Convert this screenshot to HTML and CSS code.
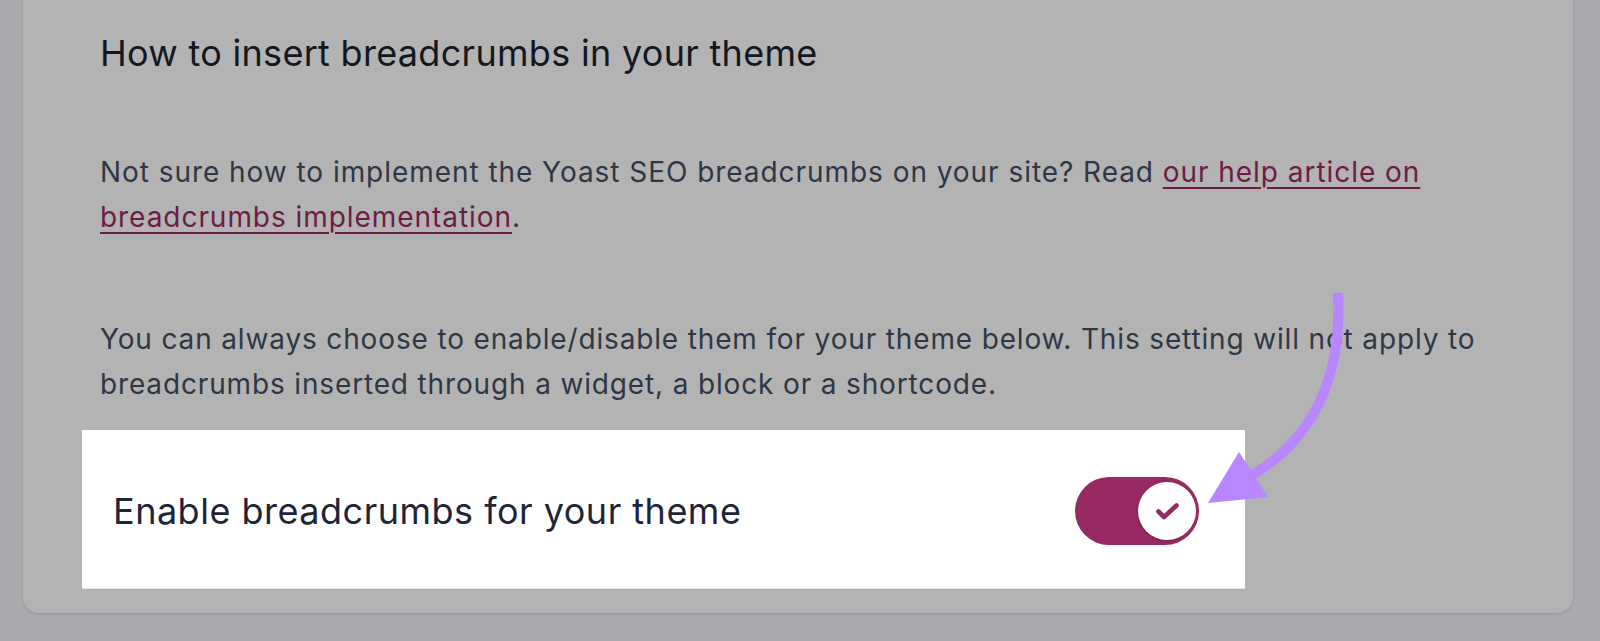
FILE: index.html
```html
<!DOCTYPE html>
<html lang="en">
<head>
<meta charset="utf-8">
<title>Breadcrumbs settings</title>
<link rel="stylesheet" href="styles.css">
</head>
<body>
<div class="page">
  <section class="card">
    <h2 class="title">How to insert breadcrumbs in your theme</h2>
    <p class="text first">Not sure how to implement the Yoast SEO breadcrumbs on your site? Read <a href="#" class="link">our help article on<br>breadcrumbs implementation</a>.</p>
    <p class="text second">You can always choose to enable/disable them for your theme below. This setting will not apply to<br>breadcrumbs inserted through a widget, a block or a shortcode.</p>
    <div class="setting">
      <span class="setting-label">Enable breadcrumbs for your theme</span>
      <span class="toggle">
        <span class="knob">
          <svg class="check" viewBox="0 0 58 58" width="58" height="58" aria-hidden="true"><path d="M20.5 29.5 L26 35 L38.5 23.5" fill="none" stroke="#962961" stroke-width="4.6" stroke-linecap="round" stroke-linejoin="round"/></svg>
        </span>
      </span>
    </div>
  </section>
  <svg class="arrow" viewBox="0 0 1600 641" width="1600" height="641" aria-hidden="true">
    <path d="M1338 293 Q1345 430 1236 484" fill="none" stroke="#b886fe" stroke-width="10"/>
    <polygon points="1208,503 1239,452 1268,497" fill="#b886fe"/>
  </svg>
</div>
</body>
</html>
```

FILE: styles.css
```css
html, body {
  margin: 0;
  padding: 0;
}
body {
  background: #a9aaae;
  font-family: Inter, "Noto Sans", "Liberation Sans", sans-serif;
  width: 1600px;
  height: 641px;
  overflow: hidden;
}
.page {
  position: relative;
  width: 1600px;
  height: 641px;
  padding: 0 27px 0 23px;
  box-sizing: border-box;
}
.card {
  background: #b3b3b3;
  height: 613px;
  box-sizing: border-box;
  border-radius: 0 0 16px 16px;
  box-shadow: 0 1px 3px rgba(0, 0, 0, 0.12);
  padding: 31px 0 0 77px;
}
.title {
  margin: 0;
  font-size: 36px;
  line-height: 44px;
  font-weight: 400;
  color: #121722;
  letter-spacing: 0.3px;
}
.text {
  margin: 0;
  font-size: 28px;
  line-height: 45px;
  color: #2f3746;
  white-space: nowrap;
  letter-spacing: 0.85px;
}
.text.first {
  letter-spacing: 0.95px;
  margin-top: 75px;
}
.text.second {
  margin-top: 77px;
}
.link {
  color: #6d1b47;
  text-decoration: underline;
  text-decoration-thickness: 2px;
  text-underline-offset: 5px;
}
.setting {
  margin: 23px 0 0 -18px;
  width: 1163px;
  height: 159px;
  box-sizing: border-box;
  background: #ffffff;
  border-bottom: 1px solid #e2e2e2;
  display: flex;
  align-items: center;
  justify-content: space-between;
  padding: 0 46px 0 31px;
}
.setting-label {
  font-size: 36px;
  font-weight: 400;
  color: #1e2537;
  letter-spacing: 0.5px;
  margin-top: 4px;
}
.toggle {
  position: relative;
  width: 124px;
  height: 68px;
  border-radius: 34px;
  background: #962961;
  margin-top: 4px;
}
.knob {
  position: absolute;
  right: 3px;
  top: 5px;
  width: 58px;
  height: 58px;
  border-radius: 50%;
  background: #ffffff;
  box-shadow: -1px 1px 2px rgba(0, 0, 0, 0.15);
}
.check {
  display: block;
}
.arrow {
  position: absolute;
  left: 0;
  top: 0;
  pointer-events: none;
}
```
